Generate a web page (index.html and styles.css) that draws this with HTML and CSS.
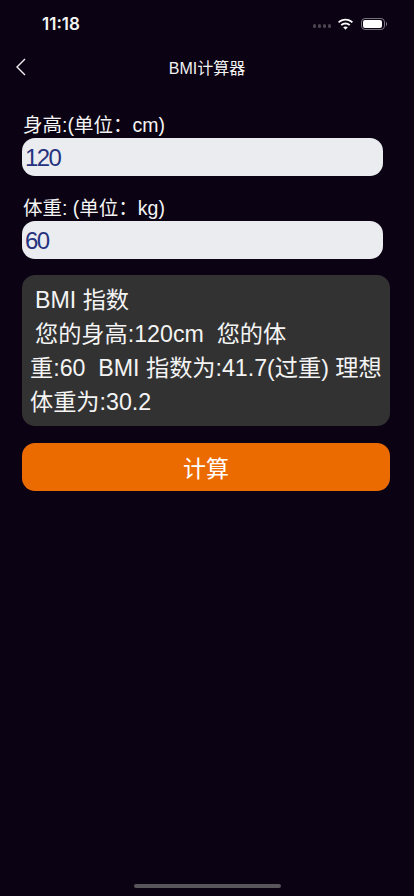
FILE: index.html
```html
<!DOCTYPE html>
<html lang="zh">
<head>
<meta charset="utf-8">
<title>BMI计算器</title>
<link rel="stylesheet" href="styles.css">
</head>
<body>
<div class="page">
  <header class="status">
    <span class="time">11:18</span>
    <div class="status-icons">
      <span class="dots"><i></i><i></i><i></i><i></i></span>
      <svg class="wifi" width="17" height="13" viewBox="0 0 17 13"><path d="M8.5 2.6c2.4 0 4.6.9 6.3 2.5l1.2-1.3C14 1.8 11.4.7 8.5.7S3 1.8 1 3.8l1.2 1.3C3.9 3.5 6.1 2.6 8.5 2.6z" fill="#fff"/><path d="M8.5 6.4c1.4 0 2.6.5 3.6 1.4l1.3-1.3C12 5.2 10.3 4.5 8.5 4.5S5 5.2 3.6 6.5l1.3 1.3c1-.9 2.2-1.4 3.6-1.4z" fill="#fff"/><path d="M8.5 8.4c-.9 0-1.7.3-2.3.9l2.3 2.5 2.3-2.5c-.6-.6-1.4-.9-2.3-.9z" fill="#fff"/></svg>
      <div class="battery"><div class="battery-body"><div class="battery-fill"></div></div><div class="battery-cap"></div></div>
    </div>
  </header>
  <nav class="nav">
    <svg class="back" width="12" height="18" viewBox="0 0 12 18"><path d="M10 1 2 9l8 8" fill="none" stroke="#f2f2f2" stroke-width="1.4"/></svg>
    <h1 class="title">BMI计算器</h1>
  </nav>
  <main class="content">
    <label class="label">身高:(单位：cm)</label>
    <div class="input">120</div>
    <label class="label label-weight">体重: (单位：kg)</label>
    <div class="input">60</div>
    <div class="card">
      <span class="line indent">BMI 指数</span>
      <span class="line indent">您的身高:120cm&nbsp; 您的体</span>
      <span class="line">重:60&nbsp; BMI 指数为:41.7(过重) 理想</span>
      <span class="line">体重为:30.2</span>
    </div>
    <button class="button">计算</button>
  </main>
  <div class="home-bar"></div>
</div>
</body>
</html>
```
FILE: styles.css
```css
* { box-sizing: border-box; }
html, body { margin: 0; padding: 0; }
body {
  background: #0b0213;
  color: #f4f4f4;
  font-family: "Liberation Sans", "Noto Sans CJK SC", sans-serif;
}
.page {
  position: relative;
  width: 414px;
  height: 896px;
  overflow: hidden;
  display: flex;
  flex-direction: column;
}
.status {
  height: 44px;
  padding: 4px 27px 0 42px;
  display: flex;
  align-items: center;
  justify-content: space-between;
  flex-shrink: 0;
}
.time { font-family: Inter, sans-serif; font-size: 17px; font-weight: 600; color: #f4f4f4; }
.status-icons { display: flex; align-items: center; gap: 6px; }
.dots { display: flex; gap: 1.6px; margin-top: 4px; }
.dots i { width: 3.2px; height: 3.2px; border-radius: 50%; background: #4a4550; }
.wifi { margin-top: 1px; }
.battery { display: flex; align-items: center; gap: 1px; margin-left: 1px; }
.battery-body {
  width: 24px; height: 12.5px;
  border: 1px solid #77737c;
  border-radius: 4px;
  padding: 1.5px;
}
.battery-fill { width: 100%; height: 100%; background: #fff; border-radius: 2px; }
.battery-cap { width: 1.2px; height: 4px; background: #77737c; border-radius: 0 1px 1px 0; }
.nav {
  height: 46px;
  display: flex;
  align-items: center;
  justify-content: center;
  position: relative;
  flex-shrink: 0;
}
.back { position: absolute; left: 15px; top: 14px; }
.title { margin: 0; font-size: 16px; font-weight: 400; color: #f2f2f2; }
.content {
  padding: 20px 24px 0 22px;
  display: flex;
  flex-direction: column;
  align-items: flex-start;
}
.label { font-size: 19.5px; line-height: 30px; height: 28px; margin-left: 1px; color: #f4f4f4; }
.label-weight { margin-top: 16.5px; }
.input {
  width: 361px;
  height: 38px;
  background: #ebecf0;
  border-radius: 13px;
  padding-left: 3px;
  font-size: 24px;
  letter-spacing: -1.6px;
  line-height: 39px;
  color: #27337f;
  flex-shrink: 0;
}
.card {
  width: 368px;
  height: 151px;
  margin-top: 16px;
  background: #323232;
  border-radius: 13px;
  padding: 8px 8px;
  font-size: 23.2px;
  color: #f4f4f4;
}
.line { display: block; line-height: 34px; white-space: nowrap; }
.indent { padding-left: 5px; }
.button {
  width: 368px;
  height: 48px;
  margin-top: 17px;
  border: 0;
  border-radius: 13px;
  background: #ec6b00;
  color: #fff;
  font-family: inherit;
  font-size: 23px;
  padding: 0;
}
.home-bar {
  position: absolute;
  left: 134px;
  bottom: 8px;
  width: 147px;
  height: 4.5px;
  border-radius: 3px;
  background: #58555b;
}
```
